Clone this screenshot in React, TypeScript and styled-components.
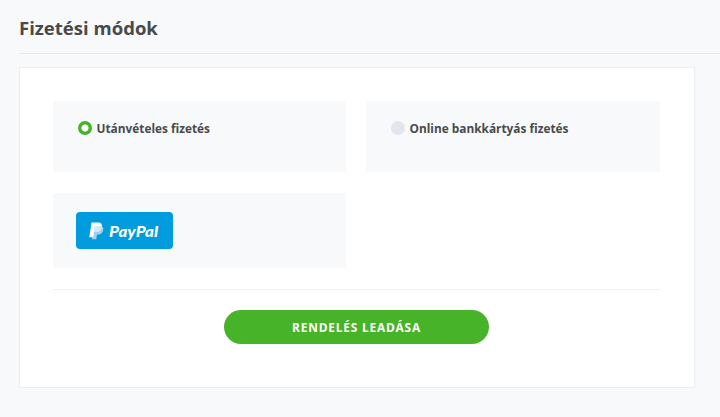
import React from 'react';
import styled, { createGlobalStyle } from 'styled-components';

const GlobalStyle = createGlobalStyle`
  * { box-sizing: border-box; }
  html, body { margin: 0; height: 100%; overflow: hidden; background: #f7f9fb; }
  body { font-family: 'Open Sans', sans-serif; color: #4a4a4a; }
`;

const Page = styled.main`
  height: 417px;
  padding: 0 0 0 19px;
  overflow: hidden;
`;

const Title = styled.h1`
  margin: 0;
  height: 54px;
  padding-top: 14px;
  border-bottom: 1px solid #e6e8ea;
  font-size: 18.55px;
  font-weight: 700;
  line-height: 27px;
`;

const Card = styled.section`
  width: 676px;
  height: 321px;
  margin-top: 13px;
  padding: 33px 34px 0;
  background: #fff;
  border: 1px solid #eceef0;
  box-shadow: 0 0 1px #eceef0;
`;

const Options = styled.div`
  display: grid;
  grid-template-columns: 293px 294px;
  grid-template-rows: 71px 75px;
  gap: 21px 20px;
  margin-left: -1px;
  padding-bottom: 21px;
  border-bottom: 1px solid #f0f1f2;
  width: 607px;
`;

const Option = styled.label`
  display: flex;
  align-items: flex-start;
  padding: 18px 0 0 24px;
  background: #f7f9fb;
  font-size: 11.85px;
  font-weight: 700;
  line-height: 18px;
  white-space: nowrap;
`;

const Radio = styled.span<{ $checked?: boolean }>`
  width: 14px;
  height: 14px;
  margin: 2px 5px 0 0.5px;
  border-radius: 50%;
  background: ${({ $checked }) =>
    $checked ? 'radial-gradient(circle, #fff 3.2px, #47b329 3.9px)' : '#e2e6ec'};
`;

const PayPalOption = styled.div`
  padding: 19px 0 0 23px;
  background: #f7f9fb;
`;

const PayPalButton = styled.button`
  display: flex;
  align-items: center;
  width: 97px;
  height: 37px;
  padding: 0 0 0 13px;
  border: 0;
  border-radius: 4px;
  background: #009cde;
  color: #fff;
`;

const PayPalName = styled.span`
  margin: 1px 0 0 5px;
  font: italic 900 15px/20px Lato, sans-serif;
  transform: scaleX(1.13);
  transform-origin: left center;
`;

const SubmitButton = styled.button`
  display: block;
  width: 265px;
  height: 34px;
  margin: 20px auto 0 170px;
  padding: 0;
  border: 0;
  border-radius: 17px;
  background: #47b329;
  color: #fff;
  font: 700 11.9px/34px 'Open Sans', sans-serif;
  letter-spacing: 0.8px;
`;

const PayPalMark = () => (
  <svg width="15" height="18" viewBox="0 0 15 18" aria-hidden="true">
    <path d="M5 4h7.3q2.6 1.1 1.9 4.1Q13.4 12.5 9.4 12.5H8L7.3 17.3H3z" fill="#9fd0ee" />
    <path d="M2.6 .6h6.6q4.2 0 3.6 3.8Q12 9.7 7.2 9.7H5.2L4.2 15.2H.3z" fill="#fff" />
    <path d="M5.5 5Q5.7 4 6.8 4h4.7l1.3.4Q12 9.7 7.2 9.7H4.7z" fill="#d4e7f5" />
  </svg>
);

export default function App() {
  return (
    <>
      <GlobalStyle />
      <Page>
        <Title>Fizetési módok</Title>
        <Card>
          <Options>
            <Option><Radio $checked />Utánvételes fizetés</Option>
            <Option><Radio />Online bankkártyás fizetés</Option>
            <PayPalOption>
              <PayPalButton type="button">
                <PayPalMark />
                <PayPalName>PayPal</PayPalName>
              </PayPalButton>
            </PayPalOption>
          </Options>
          <SubmitButton type="button">RENDELÉS LEADÁSA</SubmitButton>
        </Card>
      </Page>
    </>
  );
}
